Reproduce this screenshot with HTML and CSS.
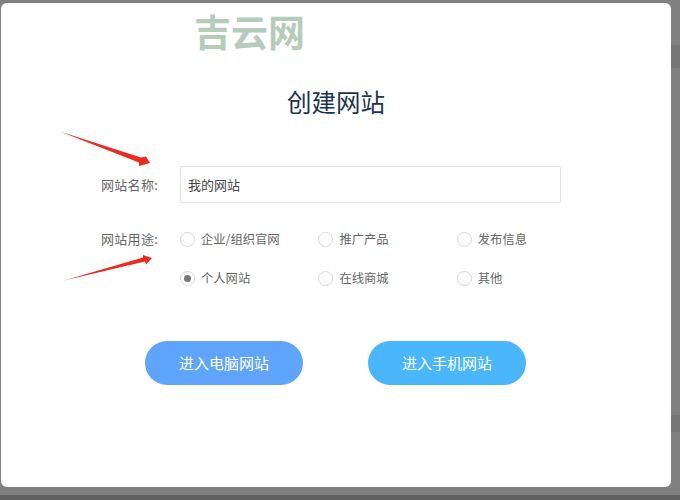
FILE: index.html
```html
<!DOCTYPE html>
<html lang="zh-CN">
<head>
<meta charset="utf-8">
<title>创建网站</title>
<link rel="stylesheet" href="styles.css">
</head>
<body>
<div class="backdrop">
  <div class="band band-top"></div>
  <div class="band band-bottom"></div>
  <main class="modal">
    <div class="logo">吉云网</div>
    <h1 class="title">创建网站</h1>
    <div class="row name-row">
      <label class="label">网站名称:</label>
      <div class="input">我的网站</div>
    </div>
    <div class="row use-row">
      <span class="label">网站用途:</span>
      <div class="options">
        <span class="opt"><i class="radio"></i>企业/组织官网</span>
        <span class="opt"><i class="radio"></i>推广产品</span>
        <span class="opt"><i class="radio"></i>发布信息</span>
        <span class="opt"><i class="radio on"></i>个人网站</span>
        <span class="opt"><i class="radio"></i>在线商城</span>
        <span class="opt"><i class="radio"></i>其他</span>
      </div>
    </div>
    <div class="buttons">
      <a class="btn btn-pc">进入电脑网站</a>
      <a class="btn btn-mobile">进入手机网站</a>
    </div>
    <svg class="arrows" width="670" height="484" viewBox="0 0 670 484">
      <polygon fill="#ee2a20" points="59,128.5 140,154.5 145,153.5 149,160 138,163 138,159.5"/>
      <polygon fill="#ee2a20" points="63,277.5 142,254.5 142,252 151,255 145,261.5 144,258.5"/>
    </svg>
  </main>
</div>
</body>
</html>
```

FILE: styles.css
```css
* { box-sizing: border-box; }
html, body { margin: 0; height: 100%; }
body {
  font-family: "Noto Sans CJK SC", "Liberation Sans", sans-serif;
  background: #808080;
  overflow: hidden;
}
.backdrop {
  position: relative;
  width: 680px;
  height: 500px;
  padding: 3px 0 0 1px;
  background: linear-gradient(#808080 495px, #5f5f5f 495px);
}
.band {
  position: absolute;
  right: 0;
  width: 9px;
  background: #767676;
}
.band-top { top: 45px; height: 23px; }
.band-bottom { top: 415px; height: 17px; }
.modal {
  position: relative;
  width: 670px;
  height: 484px;
  background: #fff;
  border-radius: 6px;
  overflow: hidden;
}
.logo {
  margin: 5px 0 0 193px;
  height: 46px;
  font-size: 37px;
  line-height: 46px;
  font-weight: 700;
  color: #b6ccba;
}
.title {
  margin: 26px 0 0;
  height: 44px;
  font-size: 24.5px;
  line-height: 44px;
  font-weight: 400;
  text-align: center;
  color: #1d3450;
}
.row {
  display: flex;
  padding-left: 100px;
  color: #666;
  font-size: 13px;
}
.label {
  width: 79px;
  flex: none;
  letter-spacing: 0.3px;
}
.name-row {
  margin-top: 42px;
  align-items: center;
}
.input {
  width: 381px;
  height: 37px;
  padding-left: 7px;
  border: 1px solid #e3e3e3;
  border-radius: 2px;
  line-height: 36px;
  color: #444;
  box-shadow: 0 0 2px rgba(0,0,0,.05);
}
.use-row {
  margin-top: 26px;
  line-height: 20px;
}
.options {
  display: grid;
  grid-template-columns: repeat(3, 138.4px);
  grid-auto-rows: 39px;
  margin-top: -1px;
}
.opt {
  display: flex;
  align-items: flex-start;
  gap: 6px;
  height: 20px;
  line-height: 20px;
  padding-top: 1px;
  font-size: 12.3px;
  color: #666;
}
.radio {
  flex: none;
  display: flex;
  align-items: center;
  justify-content: center;
  width: 15px;
  height: 15px;
  margin-top: 3px;
  border: 1px solid #d8d8d8;
  border-radius: 50%;
  background: #fff;
}
.radio.on::after {
  content: "";
  width: 7px;
  height: 7px;
  border-radius: 50%;
  background: #777;
}
.buttons {
  display: flex;
  gap: 65px;
  margin: 35px 0 0 144px;
}
.btn {
  width: 158px;
  height: 44px;
  border-radius: 22px;
  color: #fff;
  font-size: 15px;
  line-height: 44px;
  text-align: center;
}
.btn-pc { background: #5fa5fd; }
.btn-mobile { background: #4ab7fd; }
.arrows {
  position: absolute;
  left: 0;
  top: 0;
  pointer-events: none;
}
```
